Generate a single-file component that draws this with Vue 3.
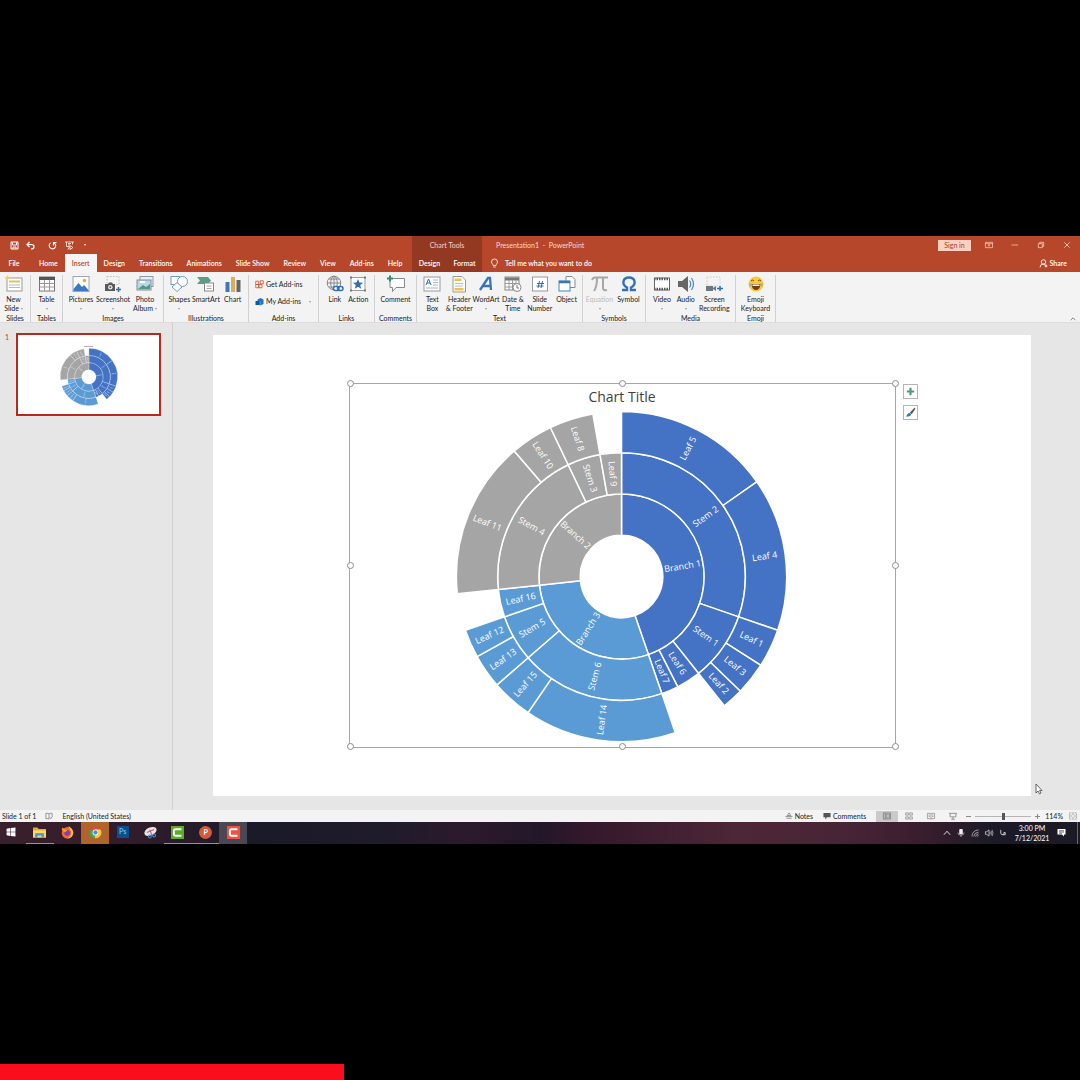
<script setup>
const icons = {
  newSlide: '<rect x="2" y="3" width="15" height="13" fill="#fff" stroke="#999"/><path d="M4 6.500h11" stroke="#e3c15a" stroke-width="2"/><path d="M4 10h11M4 12.500h11" stroke="#a8bccb"/><path d="M0 3h5M2.500 .5v5" stroke="#f2cf59" stroke-width="1.500"/>',
  table: '<rect x="1.500" y="2" width="15" height="14" fill="#fff" stroke="#777"/><path d="M1 3.500h16" stroke="#555" stroke-width="3"/><path d="M6.500 5v11M11.500 5v11M2 8.500h14M2 12h14" stroke="#999"/>',
  pictures: '<rect x="1" y="1.500" width="16" height="15" fill="#fff" stroke="#9aa5ad"/><path d="M1.500 16v-2l5-6 3.500 4 2-2 4.500 5v1z" fill="#3e78c0"/><circle cx="12.500" cy="5.500" r="1.700" fill="#eaa23b"/>',
  screenshot: '<rect x="3" y="1.500" width="12" height="8" fill="none" stroke="#bbb" stroke-dasharray="1.500 1.500"/><path d="M1 9h3l1-1.500h3L9 9h2v7H1z" fill="#595959"/><circle cx="6.300" cy="12.200" r="2.200" fill="#eee"/><circle cx="6.300" cy="12.200" r="1" fill="#595959"/><path d="M12 14.500h5M14.500 12v5" stroke="#2f6db5" stroke-width="1.500"/>',
  album: '<rect x="4" y="1.500" width="13" height="10" fill="#e9eef2" stroke="#8b9aa6"/><rect x="1" y="5" width="14" height="10" fill="#b9d8ea" stroke="#7e8e99"/><path d="M2 14l5-4 3 2 4-3v5z" fill="#4f9a80"/><path d="M4 7h5" stroke="#fff" stroke-width="2"/>',
  shapes: '<rect x="1" y="1.500" width="9" height="8" fill="#fff" stroke="#6f9ccc"/><circle cx="12.500" cy="6.500" r="5" fill="#fff" stroke="#6f9ccc"/><path d="M7 7.500l5 4.500-5 4.500-5-4.500z" fill="#fff" stroke="#6f9ccc"/>',
  smartart: '<path d="M0 2h11l3 3.500-3 3.500H0l3-3.500z" fill="#5a9c84"/><rect x="7.500" y="8" width="9" height="8" fill="#fff" stroke="#888"/><path d="M9.500 11h5M9.500 13.500h5" stroke="#aaa"/>',
  columns: '<path d="M1.500 7h4v10h-4z" fill="#3f76ba"/><path d="M7 2h4v15H7z" fill="#e0a95b"/><path d="M12.500 5h4v12h-4z" fill="#666"/>',
  link: '<g fill="none" stroke="#888"><circle cx="8" cy="8" r="6.800"/><path d="M1 8h14M8 1v14M3 4h10M3 12h8"/><ellipse cx="8" cy="8" rx="3.300" ry="6.800"/></g><rect x="7.500" y="11.500" width="5.500" height="4" rx="2" fill="#fff" stroke="#2f70b8" stroke-width="1.500"/><rect x="11.500" y="11.500" width="5.500" height="4" rx="2" fill="none" stroke="#2f70b8" stroke-width="1.500"/>',
  action: '<rect x="2" y="2.500" width="14" height="13" fill="#fff" stroke="#999"/><path d="M9 4l1.400 3.500 3.800.2-3 2.400 1 3.700L9 11.700l-3.200 2.100 1-3.700-3-2.400 3.800-.2z" fill="#2f6db5"/><path d="M1 1.500h2v2H1zM15 1.500h2v2h-2zM1 14.500h2v2H1zM15 14.500h2v2h-2z" fill="#777"/>',
  comment: '<path d="M3 3.500h14.500v9H9l-3.500 4v-4H3z" fill="#fff" stroke="#888"/><path d="M0 3.500h6M3 .5v6" stroke="#3c8c6c" stroke-width="2"/>',
  textBox: '<rect x="1" y="2" width="16" height="14" fill="#fff" stroke="#999"/><path d="M3 10l2.500-6L8 10M4 8h3" fill="none" stroke="#2f6db5"/><path d="M10 5h5M10 7.500h5M10 10h5M3 13h12" stroke="#a9b7c2"/>',
  header: '<path d="M3 1.500h9l3.500 3.500v12H3z" fill="#fff" stroke="#999"/><path d="M4.500 3.500h7v2.500h-7zM4.500 13h9v2.500h-9z" fill="#edc24c"/><path d="M5 8.500h8M5 11h8" stroke="#bbb"/>',
  wordArt: '<path d="M3 15L11 3h2l1 12M6 11h8" fill="none" stroke="#3674bd" stroke-width="2.300"/>',
  date: '<rect x="1" y="2" width="14" height="13" fill="#fff" stroke="#888"/><path d="M1 4h14" stroke="#777" stroke-width="3"/><path d="M5 5v10M8.500 5v10M12 5v6M1 8.500h14M1 12h10" stroke="#999"/><circle cx="13" cy="12.500" r="4" fill="#fff" stroke="#888"/><path d="M13 10v3h2" fill="none" stroke="#777"/>',
  number: '<rect x="1.500" y="2" width="15" height="14" fill="#fff" stroke="#999"/><path d="M8.500 6L7 13M11.500 6L10 13M6 8.500h7M5.500 11h7" stroke="#2f6db5"/>',
  object: '<path d="M8 1.500h6l3 3v8H8z" fill="#fff" stroke="#888"/><rect x="1" y="6" width="11" height="10" fill="#fff" stroke="#4a83bd"/><path d="M1 7h11" stroke="#3977b8" stroke-width="2.500"/>',
  equation: '<path d="M1 5q1-2.500 3-2.500h13M6 3q0 9-3 13M12 3v10q0 3 4 2" fill="none" stroke="#a7a7a7" stroke-width="2"/>',
  symbol: '<path d="M2 15h5v-2.500C1 9 3 2.500 9 2.500S17 9 11 12.500V15h5" fill="none" stroke="#3570b6" stroke-width="2.400"/>',
  video: '<path d="M1.500 3h15v12h-15z" fill="#fff" stroke="#666"/><path d="M1 4h16M1 14h16" stroke="#555" stroke-width="2.500" stroke-dasharray="1.500 1"/>',
  audio: '<path d="M1 6h4l6-5v16l-6-5H1z" fill="#666"/><path d="M12.500 5.500q2.500 3.500 0 7M14.500 3q4 6 0 12" fill="none" stroke="#4a87c4" stroke-width="1.200"/>',
  record: '<rect x="2" y="2" width="13" height="9" fill="none" stroke="#ccc" stroke-dasharray="1.500 1.500"/><path d="M1 11h7v5H1zM8 13l3-2v5l-3-2z" fill="#6b7785"/><path d="M12 13.500h6M15 11v5" stroke="#2f6db5" stroke-width="1.500"/>',
  emoji: '<circle cx="9" cy="9" r="7.500" fill="#fbc937"/><path d="M4.500 9h9q-.5 6-4.500 6T4.500 9z" fill="#7a3d16"/><path d="M5.500 9.500h7v1.500h-7z" fill="#fff"/><path d="M4 6q1.500-2 3 0M11 6q1.500-2 3 0" fill="none" stroke="#6e4217"/><path d="M2 8.500h2.500l-1 3q-2 0-1.500-3zM16 8.500h-2.500l1 3q2 0 1.500-3z" fill="#8fb9b0"/>',
  store: '<path d="M1.500 2.500h6v6.500h-6zM1.500 9h6v6.500h-6zM7.500 9h6.500v6.500H7.500z" fill="#fff" stroke="#d35230" stroke-width="1.700"/><path d="M10.500 1.500h6v6h-6z" fill="#fff" stroke="#d35230" stroke-width="1.700"/>',
  addins: '<path d="M5 5l6-3 6 3v9l-6 3-6-3z" fill="#1f74c7"/><path d="M1 8h7v8H1z" fill="#0f56a3"/><path d="M11 9v7" stroke="#6cb0ec"/>',
  save: '<path d="M2 2h14v14H2z" fill="none" stroke="#fff" stroke-width="2"/><path d="M5 3v5h8V3M6 16v-4h6v4" fill="none" stroke="#fff" stroke-width="2"/>',
  undo: '<path d="M2 7h9q5 0 5 4.500T10 16M7 2L2 7l5 5" fill="none" stroke="#fff" stroke-width="2.400"/>',
  redo: '<path d="M12 3.500A6.500 6.500 0 1 1 5 4M11 9V3h6" fill="none" stroke="#fff" stroke-width="2.200"/>',
  present: '<path d="M0 2h18M3 2v9h5M15 2v5M9 11l-3 6M6 5h6M6 8h4" fill="none" stroke="#fff" stroke-width="1.500"/><path d="M10 9l6 4-6 4z" fill="none" stroke="#fff" stroke-width="1.500"/>',
  bulb: '<path d="M6 13C6 10 3 9 3 6a6 6 0 0 1 12 0c0 3-3 4-3 7zM6.500 16h5" fill="none" stroke="#fff" stroke-width="1.600"/>',
  display: '<path d="M1 3h16v12H1zM1 6h16M9 13V8M6.500 10L9 8l2.500 2" fill="none" stroke="#fbd9cf" stroke-width="1.500"/>',
  minimize: '<path d="M1 9h15" stroke="#fbd9cf" stroke-width="1.500"/>',
  restore: '<path d="M3 6h9v9H3zM6 6V3h9v9h-3" fill="none" stroke="#fbd9cf" stroke-width="1.600"/>',
  close: '<path d="M3 3l12 12M15 3L3 15" stroke="#fbd9cf" stroke-width="1.800"/>',
  person: '<circle cx="9" cy="6" r="4.500" fill="none" stroke="#fff" stroke-width="1.700"/><path d="M2 17q0-7 7-7 3 0 5 3M11 14h6M14 11v6" fill="none" stroke="#fff" stroke-width="1.700"/>',
  plus: '<path d="M9 3v12M3 9h12" stroke="#4c9b7b" stroke-width="3.500"/>',
  brush: '<path d="M8 9l8-8 1 2-6 9z" fill="#555"/><path d="M2 16q2-7 6-6l2 2q0 4-8 4z" fill="#3f78bb"/>',
  spell: '<path d="M2 3h5l2 1.500L11 3h5v6M9 4.500V16M2 3v12h5l2 1M11 12l2 3 4-6" fill="none" stroke="#666" stroke-width="1.400"/>',
  notes: '<path d="M1 10h16M3 14h12M5 8l4-6 4 6z" fill="none" stroke="#777" stroke-width="1.700"/>',
  bubble: '<path d="M1 2h16v10H9l-4 5v-5H1z" fill="#555"/>',
  normal: '<path d="M1 2h16v14H1zM5 2v14M7.500 5h7v8h-7z" fill="none" stroke="#666" stroke-width="1.300"/>',
  sorter: '<path d="M1.500 2h6v5h-6zM10.500 2h6v5h-6zM1.500 11h6v5h-6zM10.500 11h6v5h-6z" fill="none" stroke="#777" stroke-width="1.400"/>',
  reading: '<path d="M1 3h6l2 1.500L11 3h6v12h-6l-2 1-2-1H1zM9 4v12M3.500 7h3M3.500 10h3M11.500 7h3M11.500 10h3" fill="none" stroke="#777" stroke-width="1.400"/>',
  show: '<path d="M0 3h18M2.500 3v8h13V3M9 11v5M5 16.500h8" fill="none" stroke="#777" stroke-width="1.700"/>',
  fit: '<path d="M1 2h16v14H1z" fill="none" stroke="#777" stroke-width="1.400" stroke-dasharray="4 2"/><path d="M6 6L3.500 9 6 12M12 6l2.500 3-2.500 3M9 4v3M9 11v3" fill="none" stroke="#777" stroke-width="1.400"/>',
  windows: '<path d="M1 3l7-1v6.500H1zM9 1.800L17 1v7.500H9zM1 9.500h7V16l-7-1zM9 9.500h8V17l-8-1z" fill="#fff"/>',
  folder: '<path d="M0 2h6l2 2h10v12H0z" fill="#e7a92e"/><path d="M0 6h18v10H0z" fill="#fbd768"/><path d="M3 10h12v6h-3v-3H6v3H3z" fill="#3f95d2"/>',
  firefox: '<circle cx="9" cy="9.500" r="8" fill="#f4672f"/><path d="M10 0q6 3 7 9-1 8-8 8 6-3 5-9z" fill="#fdc636"/><circle cx="8.500" cy="9.500" r="4" fill="#7b3fb8"/><path d="M1 5l1-3 3 3 4 1-4 3z" fill="#ff9a2c"/>',
  chrome: '<circle cx="9" cy="9" r="8" fill="#e8473c"/><path d="M9 9L2 5a8 8 0 0 0 6 12z" fill="#44a657"/><path d="M9 9L8 17a8 8 0 0 0 8-12H9z" fill="#f7ca3e"/><circle cx="9" cy="9" r="4" fill="#fff"/><circle cx="9" cy="9" r="3" fill="#4a8af0"/>',
  snip: '<ellipse cx="9" cy="7.500" rx="9" ry="5.500" fill="#e8e6ea" transform="rotate(-25 9 7.500)"/><path d="M4 9l10-4M8 5l3 8" stroke="#bb6175" stroke-width="1.500"/><circle cx="8" cy="14.500" r="2" fill="none" stroke="#4b8ecb" stroke-width="1.500"/><circle cx="14" cy="13" r="2" fill="none" stroke="#4b8ecb" stroke-width="1.500"/>',
  camGreen: '<path d="M0 0h18v18H0z" fill="#5cab25"/><path d="M14.500 4.500H6q-2 0-2 2v5q0 2 2 2h8.500" fill="none" stroke="#fff" stroke-width="2.800"/>',
  camRed: '<path d="M0 0h18v18H0z" fill="#f1503f"/><path d="M14.500 4.500H6q-2 0-2 2v5q0 2 2 2h8.500" fill="none" stroke="#fff" stroke-width="2.800"/>',
  up: '<path d="M2 13l7-8 7 8" fill="none" stroke="#eee" stroke-width="2"/>',
  mic: '<rect x="5" y="0" width="8" height="12" rx="2" fill="#eee"/><path d="M2 8q0 6 7 6t7-6M9 13v5" fill="none" stroke="#ccc" stroke-width="1.500"/>',
  wifi: '<path d="M2 17Q3 3 17 2M6 17q1-9 11-10M10 17q1-5 7-6M14 17q0-2 3-2" fill="none" stroke="#ccc" stroke-width="1.600"/>',
  speaker: '<path d="M1 6h3l5-4v14l-5-4H1z" fill="none" stroke="#eee" stroke-width="1.500"/><path d="M11 6q2 3 0 6M13.500 4q4 5 0 10M16 2q4 7 0 14" fill="none" stroke="#ddd" stroke-width="1.300"/>',
  lang: '<path d="M4 2v7q0 4 5 4h5V8h-3v5" fill="none" stroke="#ddd" stroke-width="2"/>',
  notify: '<path d="M1 2h16v11h-3v4l-4-4H1z" fill="#fff"/><path d="M4 5.500h10M4 8h10M4 10.500h6" stroke="#30232e" stroke-width="1.200"/>'
}

const tabs = ['Home', 'Insert', 'Design', 'Transitions', 'Animations', 'Slide Show', 'Review', 'View', 'Add-ins', 'Help']

const groups = [
  { name: 'Slides', cls: 'slides', items: [['newSlide', 'New', 'Slide', 1]] },
  { name: 'Tables', cls: 'tables', items: [['table', 'Table', '', 1]] },
  { name: 'Images', cls: 'images', items: [['pictures', 'Pictures', '', 1], ['screenshot', 'Screenshot', '', 1], ['album', 'Photo', 'Album', 1]] },
  { name: 'Illustrations', cls: 'illustrations', items: [['shapes', 'Shapes', '', 1], ['smartart', 'SmartArt', ''], ['columns', 'Chart', '']] },
  { name: 'Add-ins', cls: 'addins', rows: [['store', 'Get Add-ins'], ['addins', 'My Add-ins', 1]] },
  { name: 'Links', cls: 'links', items: [['link', 'Link', ''], ['action', 'Action', '']] },
  { name: 'Comments', cls: 'comments', items: [['comment', 'Comment', '']] },
  { name: 'Text', cls: 'text', items: [['textBox', 'Text', 'Box'], ['header', 'Header', '& Footer'], ['wordArt', 'WordArt', '', 1], ['date', 'Date &', 'Time'], ['number', 'Slide', 'Number'], ['object', 'Object', '']] },
  { name: 'Symbols', cls: 'symbols', items: [['equation', 'Equation', '', 1, 1], ['symbol', 'Symbol', '']] },
  { name: 'Media', cls: 'media', items: [['video', 'Video', '', 1], ['audio', 'Audio', '', 1], ['record', 'Screen', 'Recording']] },
  { name: 'Emoji', cls: 'emojis', items: [['emoji', 'Emoji', 'Keyboard']] }
]

// label, ring, start angle, end angle (degrees clockwise from the top), series
const segments = [
  ['Branch 1', 0, 0, 161, 'a'], ['Branch 3', 0, 161, 264, 'b'], ['Branch 2', 0, 264, 360, 'c'],
  ['Stem 2', 1, 0, 109, 'a'], ['Stem 1', 1, 109, 141.5, 'a'], ['Leaf 6', 1, 141.5, 153, 'a'], ['Leaf 7', 1, 153, 161, 'a'],
  ['Stem 6', 1, 161, 229, 'b'], ['Stem 5', 1, 229, 251, 'b'], ['Leaf 16', 1, 251, 264, 'b'],
  ['Stem 4', 1, 264, 334.5, 'c'], ['Stem 3', 1, 334.5, 350, 'c'], ['Leaf 9', 1, 350, 360, 'c'],
  ['Leaf 5', 2, 0, 55, 'a'], ['Leaf 4', 2, 55, 109, 'a'], ['Leaf 1', 2, 109, 122.5, 'a'], ['Leaf 3', 2, 122.5, 134, 'a'], ['Leaf 2', 2, 134, 141.5, 'a'],
  ['Leaf 14', 2, 161, 214.5, 'b'], ['Leaf 15', 2, 214.5, 229, 'b'], ['Leaf 13', 2, 229, 241, 'b'], ['Leaf 12', 2, 241, 251, 'b'],
  ['Leaf 11', 2, 264, 319.5, 'c'], ['Leaf 10', 2, 319.5, 334.5, 'c'], ['Leaf 8', 2, 334.5, 350, 'c']
].map(([label, ring, from, to, series]) => {
  const step = 41.4
  const inner = step * (ring + 1)
  const outer = inner + step
  const at = (radius, deg) => {
    const t = (deg * Math.PI) / 180
    return [radius * Math.sin(t), -radius * Math.cos(t)].map((n) => n.toFixed(2)).join(' ')
  }
  const big = to - from > 180 ? 1 : 0
  const mid = (from + to) / 2
  const turn = mid > 180 ? mid - 270 : mid - 90
  return {
    label,
    series,
    d: `M${at(inner, from)}L${at(outer, from)}A${outer} ${outer} 0 ${big} 1 ${at(outer, to)}L${at(inner, to)}A${inner} ${inner} 0 ${big} 0 ${at(inner, from)}Z`,
    place: `translate(${at(inner + step / 2, mid)}) rotate(${turn})`
  }
})

const handles = ['nw', 'n', 'ne', 'w', 'e', 'sw', 's', 'se']
const views = [['normal', 'Normal'], ['sorter', 'Slide Sorter'], ['reading', 'Reading View'], ['show', 'Slide Show']]
const apps = [['folder', 'File Explorer'], ['firefox', 'Firefox'], ['chrome', 'Chrome'], ['ps', 'Photoshop'], ['snip', 'Snipping Tool'], ['camGreen', 'Camtasia'], ['pp', 'PowerPoint'], ['camRed', 'Recorder']]
const tray = ['up', 'mic', 'wifi', 'speaker', 'lang']
</script>

<template>
  <div class="page">
    <main class="app">
      <header class="top">
        <div class="titlebar">
          <div class="quick">
            <button v-for="n in ['save', 'undo', 'redo', 'present']" :key="n" :aria-label="n" :class="n"><svg viewBox="0 0 18 18" v-html="icons[n]" /></button>
            <button class="caret" aria-label="Customize"></button>
          </div>
          <span class="tools">Chart Tools</span>
          <span class="doc">Presentation1&nbsp; -&nbsp; PowerPoint</span>
          <div class="window">
            <button class="signin">Sign in</button>
            <button v-for="n in ['display', 'minimize', 'restore', 'close']" :key="n" :aria-label="n"><svg viewBox="0 0 18 18" v-html="icons[n]" /></button>
          </div>
        </div>
        <nav class="tabs">
          <button class="file">File</button>
          <div class="main-tabs">
            <button v-for="t in tabs" :key="t" :class="{ active: t === 'Insert' }">{{ t }}</button>
          </div>
          <div class="context"><button>Design</button><button>Format</button></div>
          <button class="tell"><svg viewBox="0 0 18 18" v-html="icons.bulb" />Tell me what you want to do</button>
          <button class="share"><svg viewBox="0 0 18 18" v-html="icons.person" />Share</button>
        </nav>
      </header>

      <section class="ribbon" aria-label="Insert">
        <div v-for="g in groups" :key="g.name" class="group" :class="g.cls">
          <div v-if="g.items" class="items">
            <button v-for="i in g.items" :key="i[0]" class="item" :class="[i[0], { off: i[4] }]">
              <svg viewBox="0 0 18 18" v-html="icons[i[0]]" />
              <span>{{ i[1] }}</span>
              <span class="second">{{ i[2] }}<i v-if="i[3]" class="caret"></i></span>
            </button>
          </div>
          <div v-else class="rows">
            <button v-for="r in g.rows" :key="r[0]"><svg viewBox="0 0 18 18" v-html="icons[r[0]]" />{{ r[1] }}<i v-if="r[2]" class="caret"></i></button>
          </div>
          <span class="name">{{ g.name }}</span>
        </div>
        <button class="collapse" aria-label="Collapse the ribbon"><svg viewBox="0 0 10 6"><path d="M1 5l4-4 4 4" fill="none" stroke="#777" stroke-width="1.500" /></svg></button>
      </section>

      <section class="work">
        <aside class="thumbs">
          <span class="index">1</span>
          <button class="thumb" aria-label="Slide 1">
            <span>Chart Title</span>
            <svg class="burst" viewBox="-167 -167 334 334">
              <path v-for="s in segments" :key="s.label" :d="s.d" :class="s.series" />
              <text v-for="s in segments" :key="s.label" :transform="s.place" dy="3">{{ s.label }}</text>
            </svg>
          </button>
        </aside>
        <div class="canvas">
          <div class="slide">
            <figure class="plot">
              <figcaption>Chart Title</figcaption>
              <svg class="burst" viewBox="-167 -167 334 334">
                <path v-for="s in segments" :key="s.label" :d="s.d" :class="s.series" />
                <text v-for="s in segments" :key="s.label" :transform="s.place" dy="3">{{ s.label }}</text>
              </svg>
              <i v-for="h in handles" :key="h" class="handle" :class="h"></i>
              <div class="side">
                <button aria-label="Chart elements"><svg viewBox="0 0 18 18" v-html="icons.plus" /></button>
                <button aria-label="Chart styles"><svg viewBox="0 0 18 18" v-html="icons.brush" /></button>
              </div>
            </figure>
          </div>
          <svg class="pointer" viewBox="0 0 8 12"><path d="M1 1v9l2-2 1.500 3 1.500-1-1.500-2.500H7z" fill="#fff" stroke="#444" stroke-width=".8" /></svg>
        </div>
      </section>

      <footer class="status">
        <span>Slide 1 of 1</span>
        <svg class="spell" viewBox="0 0 18 18" v-html="icons.spell" />
        <span>English (United States)</span>
        <div class="right">
          <button class="remarks"><svg viewBox="0 0 18 18" v-html="icons.notes" />Notes</button>
          <button class="remarks"><svg viewBox="0 0 18 18" v-html="icons.bubble" />Comments</button>
          <div class="views">
            <button v-for="v in views" :key="v[0]" :class="{ on: v[0] === 'normal' }" :aria-label="v[1]"><svg viewBox="0 0 18 18" v-html="icons[v[0]]" /></button>
          </div>
          <button class="sign" aria-label="Zoom out"><i></i></button>
          <input type="range" min="10" max="218" value="114" aria-label="Zoom" />
          <button class="sign more" aria-label="Zoom in"><i></i></button>
          <span class="percent">114%</span>
          <button aria-label="Fit to window"><svg viewBox="0 0 18 18" v-html="icons.fit" /></button>
        </div>
      </footer>

      <footer class="taskbar">
        <button class="start" aria-label="Start"><svg viewBox="0 0 18 18" v-html="icons.windows" /></button>
        <div class="apps">
          <button v-for="a in apps" :key="a[0]" :class="a[0]" :aria-label="a[1]">
            <span v-if="a[0] === 'ps'" class="ps-logo">Ps</span>
            <span v-else-if="a[0] === 'pp'" class="pp-logo">P</span>
            <svg v-else viewBox="0 0 18 18" v-html="icons[a[0]]" />
          </button>
        </div>
        <div class="tray">
          <svg v-for="t in tray" :key="t" viewBox="0 0 18 18" v-html="icons[t]" />
          <time><span>3:00 PM</span><span>7/12/2021</span></time>
          <svg class="notify" viewBox="0 0 18 18" v-html="icons.notify" />
        </div>
      </footer>
    </main>
    <div class="progress"></div>
  </div>
</template>

<style>
body { margin: 0; background: #000; }
</style>

<style scoped>
* { box-sizing: border-box; }
.page {
  min-height: 100vh;
  display: grid;
  grid-template: 1fr auto 1fr / 100%;
  font: 7px/9px "Lato", "Open Sans", sans-serif;
  color: #222;
}
.app { grid-row: 2; }
.progress { grid-row: 3; align-self: end; width: 31.85%; height: 16px; background: #fc0d1b; }
button { border: 0; padding: 0; margin: 0; background: none; font: inherit; color: inherit; white-space: nowrap; display: flex; align-items: center; justify-content: center; }
svg { display: block; flex: none; overflow: visible; }
.caret { width: 0; height: 0; border: 1px solid transparent; border-top: 2px solid #999; border-bottom: 0; }

.top { background: #b7472a; color: #fff; }
.titlebar { display: flex; height: 18px; align-items: stretch; }
.quick { width: 412px; display: flex; align-items: center; padding-left: 9px; }
.quick button { width: 10px; margin-right: 6px; }
.quick .undo { margin-right: 12px; }
.quick .redo { margin-right: 7px; }
.quick svg { width: 9px; height: 9px; }
.quick .caret { width: 2px; margin: 0 0 0 4px; border-top-color: #fff; }
.tools { width: 70px; background: #943921; color: #f5d5cb; display: flex; align-items: center; justify-content: center; }
.doc { margin-left: 14px; align-self: center; color: #f9d9cf; }
.window { margin-left: auto; display: flex; align-items: center; padding-right: 9px; gap: 18px; }
.window svg { width: 8px; height: 8px; }
.window .signin { width: 33px; height: 11px; background: #fcd0c0; color: #a5402a; margin-right: -4px; }
.tabs { display: flex; height: 18px; font-weight: 600; }
.file { width: 28px; }
.main-tabs { width: 384px; display: flex; padding-left: 4px; }
.main-tabs button { padding: 0 7px; }
.main-tabs .active { background: #f5f5f5; color: #b7472a; }
.context { width: 70px; display: flex; background: #943921; }
.context button { flex: 1; }
.tell { margin-left: 8px; gap: 6px; }
.tell svg, .share svg { width: 9px; height: 9px; }
.share { margin-left: auto; margin-right: 13px; gap: 2px; }

.ribbon { display: flex; height: 51px; background: #f3f3f3; border-bottom: 1px solid #dcdcdc; }
.group { display: flex; flex-direction: column; border-right: 1px solid #d0d0d0; margin: 3px 0 0; padding: 0 2px; }
.items { display: flex; flex: 1; }
.item { flex: 1 1 0; min-width: 0; flex-direction: column; justify-content: flex-start; }
.item svg { width: 18px; height: 18px; margin-bottom: 2px; }
.item.off { color: #bbb; }
.second { display: flex; align-items: center; gap: 2px; height: 9px; }
.name { text-align: center; height: 8px; align-self: center; white-space: nowrap; line-height: 8px; }
.slides { width: 31px; }
.slides .items { margin-left: -3px; }
.tables { width: 32px; }
.images { width: 101px; }
.illustrations { width: 85px; }
.addins { width: 70px; }
.links { width: 56px; padding: 0 4px; }
.comments { width: 42px; }
.text { width: 166px; }
.symbols { width: 63px; }
.media { width: 90px; padding: 0 4px; }
.media .record { flex-grow: 1.4; }
.emojis { width: 40px; }
.rows { flex: 1; padding: 1px 0 0 4px; }
.rows button { height: 17px; gap: 2px; }
.rows svg { width: 9px; height: 9px; }
.rows .caret { margin-left: 6px; }
.collapse { margin-left: auto; align-self: flex-end; margin-right: 4px; margin-bottom: 1px; }
.collapse svg { width: 6px; height: 4px; }

.work { display: flex; background: #e6e6e6; }
.thumbs { width: 173px; border-right: 1px solid #d0d0d0; display: flex; align-items: flex-start; padding: 10px 11px 0 5px; }
.index { width: 11px; color: #c5412c; }
.thumb { flex: 1; aspect-ratio: 145 / 83; background: #fff; border: 2px solid #b8281e; flex-direction: column; }
.thumb span { font-size: 2px; line-height: 3px; }
.thumb .burst { width: 41%; }
.canvas { flex: 1; padding: 12px 49px 14px 40px; position: relative; }
.slide { background: #fff; aspect-ratio: 16 / 9; display: flex; align-items: center; justify-content: center; }
.plot { position: relative; margin: 0 0 0 1px; width: 66.9%; aspect-ratio: 3 / 2; border: 1px solid #a6a6a6; display: flex; flex-direction: column; align-items: center; padding: 4px 1px 0 0; }
figcaption { font: 14px/18px "Open Sans", sans-serif; color: #404040; margin-bottom: 4px; }
.plot .burst { width: 61.2%; }
.burst path { stroke: #fff; stroke-width: 1.5; }
.burst text { font: 9px "Open Sans", sans-serif; fill: #fff; text-anchor: middle; }
.a { fill: #4472c4; }
.b { fill: #5b9bd5; }
.c { fill: #a5a5a5; }
.handle { position: absolute; width: 7px; height: 7px; margin: -4px -3px -3px; border: 1px solid #8c8c8c; border-radius: 50%; background: #fff; left: 50%; top: 50%; }
.nw, .n, .ne { top: 0; }
.sw, .s, .se { top: 100%; }
.nw, .w, .sw { left: 0; }
.ne, .e, .se { left: 100%; }
.side { position: absolute; left: 100%; top: 0; margin-left: 8px; display: grid; gap: 6px; }
.side button { width: 15px; height: 15px; background: #fff; border: 1px solid #b5b5b5; }
.side svg { width: 11px; height: 11px; }
.pointer { position: absolute; right: 37px; bottom: 15px; width: 8px; height: 12px; }

.status { display: flex; align-items: center; height: 12px; background: #f3f3f3; padding: 1px 0 0 2px; }
.status svg { width: 8px; height: 8px; }
.status .spell { margin: 0 9px; }
.right { margin-left: auto; display: flex; align-items: center; align-self: stretch; padding-right: 3px; }
.remarks { gap: 2px; margin-right: 10px; }
.views { display: flex; align-self: stretch; margin-right: 1px; }
.views button { width: 22px; }
.views .on { background: #cacaca; }
.sign { width: 7px; height: 9px; }
.sign i { width: 5px; height: 1px; background: #888; }
.more i { height: 5px; background: linear-gradient(#888, #888) center / 5px 1px no-repeat, linear-gradient(#888, #888) center / 1px 5px no-repeat; }
input { appearance: none; margin: 0 3px; width: 56px; height: 7px; background: linear-gradient(#b5b5b5, #b5b5b5) center / 100% 1px no-repeat; }
input::-webkit-slider-thumb { appearance: none; width: 3px; height: 7px; background: #555; }
.percent { margin: 0 6px 0 4px; }

.taskbar { display: flex; height: 22px; background: linear-gradient(90deg, #3a1f2c, #321c2b 12%, #1b1a28 24%, #1f1b2a 36%, #2c1a2c 43%, #221728 50%, #35192c 55%, #4d2637 68%, #482536 78%, #3a1e2e 85%, #1c1a27 92%); color: #fff; }
.taskbar button { border-bottom: 1px solid transparent; }
.taskbar button svg { width: 13px; height: 13px; }
.taskbar .start { width: 22px; margin-right: 4px; }
.taskbar .start svg { width: 10px; height: 10px; }
.apps { display: flex; width: 221px; }
.apps button { flex: 1; }
.apps .chrome { background: #b0642c; }
.apps .camRed { background: #4b4854; }
.apps .folder, .apps .camGreen, .apps .pp { border-bottom-color: #6f9dc8; }
.ps-logo { width: 12px; height: 12px; background: #0b4f8b; color: #6cc5ff; line-height: 11px; font-weight: 600; }
.pp-logo { width: 13px; height: 13px; border-radius: 50%; background: #d5593a; line-height: 13px; font-weight: 700; }
.tray { margin: 0 2px 0 auto; border-right: 1px solid #6a6672; display: flex; align-items: center; gap: 6px; padding-right: 11px; }
.tray svg { width: 8px; height: 8px; }
time { display: flex; flex-direction: column; align-items: center; width: 38px; line-height: 10px; }
.tray .notify { width: 9px; height: 9px; }
</style>
